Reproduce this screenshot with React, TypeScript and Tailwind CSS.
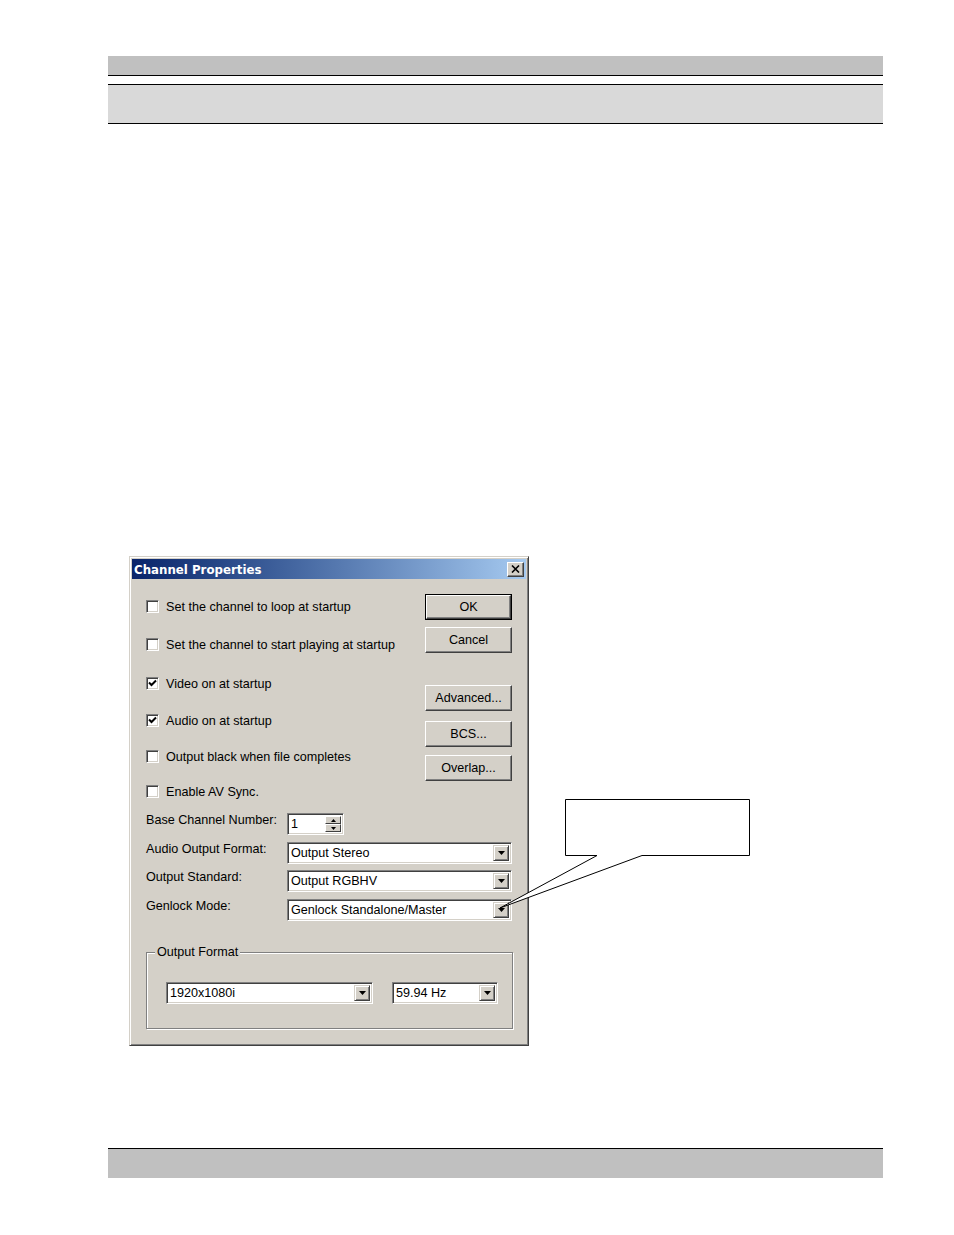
import React from "react";

const font = { fontFamily: '"Liberation Sans", Arial, sans-serif' };

function Check({ checked }: { checked?: boolean }) {
  return (
    <div className="w-[13px] h-[13px] bg-white border border-t-[#808080] border-l-[#808080] border-b-white border-r-white shadow-[inset_1px_1px_0_#404040,inset_-1px_-1px_0_#d4d0c8] flex items-center justify-center">
      {checked && (
        <svg width="9" height="9" viewBox="0 0 9 9">
          <path d="M1 3.5 L3.5 6 L8 1.5" stroke="#000" strokeWidth="2" fill="none" />
        </svg>
      )}
    </div>
  );
}

function CheckRow({ label, checked, mt }: { label: string; checked?: boolean; mt: string }) {
  return (
    <div className={`flex items-center h-[16px] ${mt}`}>
      <Check checked={checked} />
      <span className="ml-[7px] pt-[2px] text-[12.6px] text-black leading-none">{label}</span>
    </div>
  );
}

function Btn({ label, def, mt }: { label: string; def?: boolean; mt: string }) {
  const inner = (
    <div className="w-full h-full bg-[#d4d0c8] border border-t-white border-l-white border-b-[#404040] border-r-[#404040] shadow-[inset_-1px_-1px_0_#808080] flex items-center justify-center text-[12.6px] text-black">
      {label}
    </div>
  );
  return def ? (
    <div className={`w-[87px] h-[26px] border border-black ${mt}`}>{inner}</div>
  ) : (
    <div className={`w-[87px] h-[26px] ${mt}`}>{inner}</div>
  );
}

function Arrow() {
  return (
    <div className="w-[16px] h-full bg-[#d4d0c8] border border-t-[#d4d0c8] border-l-[#d4d0c8] border-b-[#404040] border-r-[#404040] shadow-[inset_1px_1px_0_#fff,inset_-1px_-1px_0_#808080] flex items-center justify-center">
      <svg width="7" height="4" viewBox="0 0 7 4">
        <path d="M0 0 H7 L3.5 4 Z" fill="#000" />
      </svg>
    </div>
  );
}

function Combo({ value, w }: { value: string; w: string }) {
  return (
    <div className={`${w} h-[22px] bg-white border border-t-[#808080] border-l-[#808080] border-b-white border-r-white shadow-[inset_1px_1px_0_#404040,inset_-1px_-1px_0_#d4d0c8] flex p-[2px]`}>
      <div className="flex-1 flex items-center pl-[1px] pt-[1px] text-[12.6px] text-black leading-none">{value}</div>
      <Arrow />
    </div>
  );
}

function Spin() {
  return (
    <div className="w-[57px] h-[22px] bg-white border border-t-[#808080] border-l-[#808080] border-b-white border-r-white shadow-[inset_1px_1px_0_#404040,inset_-1px_-1px_0_#d4d0c8] flex p-[2px]">
      <div className="flex-1 flex items-center pl-[1px] pt-[1px] text-[12.6px] text-black leading-none">1</div>
      <div className="w-[16px] h-full flex flex-col">
        {[0, 1].map((i) => (
          <div
            key={i}
            className="flex-1 bg-[#d4d0c8] border border-t-white border-l-white border-b-[#404040] border-r-[#404040] flex items-center justify-center"
          >
            <svg width="5" height="3" viewBox="0 0 5 3">
              {i === 0 ? <path d="M0 3 H5 L2.5 0 Z" fill="#000" /> : <path d="M0 0 H5 L2.5 3 Z" fill="#000" />}
            </svg>
          </div>
        ))}
      </div>
    </div>
  );
}

function FormRow({ label, children, mt }: { label: string; children: React.ReactNode; mt: string }) {
  return (
    <div className={`flex items-start h-[22px] ${mt}`}>
      <div className="w-[141px] text-[12.6px] text-black leading-[14px]">{label}</div>
      {children}
    </div>
  );
}

export default function App() {
  return (
    <div className="relative w-[954px] h-[1235px] bg-white flex flex-col" style={font}>
      {/* header */}
      <div className="mt-[56px] ml-[108px] w-[775px]">
        <div className="h-[20px] bg-[#c0c0c0] border-b border-black" />
        <div className="mt-[8px] h-[40px] bg-[#d9d9d9] border-t border-b border-black" />
      </div>

      {/* dialog */}
      <div className="mt-[432px] ml-[129px] w-[400px] h-[490px] bg-[#d4d0c8] border border-t-[#d4d0c8] border-l-[#d4d0c8] border-b-[#404040] border-r-[#404040] shadow-[inset_1px_1px_0_#fff,inset_-1px_-1px_0_#808080] p-[2px] flex flex-col">
        <div className="h-[20px] bg-gradient-to-r from-[#0a246a] to-[#a6caf0] flex items-center justify-between pl-[2px] pr-[2px]">
          <span
            className="text-[11.8px] pt-[3px] font-bold text-white leading-none"
            style={{ fontFamily: '"DejaVu Sans", Verdana, sans-serif' }}
          >
            Channel Properties
          </span>
          <div className="w-[17px] h-[15px] bg-[#d4d0c8] border border-t-white border-l-white border-b-[#404040] border-r-[#404040] shadow-[inset_-1px_-1px_0_#808080] flex items-center justify-center">
            <svg width="9" height="8" viewBox="0 0 9 8">
              <path d="M1 0.5 L8 7.5 M8 0.5 L1 7.5" stroke="#000" strokeWidth="1.6" />
            </svg>
          </div>
        </div>

        <div className="flex flex-col px-[14px] pt-[15px]">
          <div className="flex justify-between">
            <div className="flex flex-col mt-[4px]">
              <CheckRow label="Set the channel to loop at startup" mt="mt-0" />
              <CheckRow label="Set the channel to start playing at startup" mt="mt-[22px]" />
              <CheckRow label="Video on at startup" checked mt="mt-[23px]" />
              <CheckRow label="Audio on at startup" checked mt="mt-[21px]" />
              <CheckRow label="Output black when file completes" mt="mt-[20px]" />
              <CheckRow label="Enable AV Sync." mt="mt-[19px]" />
            </div>
            <div className="flex flex-col">
              <Btn label="OK" def mt="mt-0" />
              <Btn label="Cancel" mt="mt-[7px]" />
              <Btn label="Advanced..." mt="mt-[32px]" />
              <Btn label="BCS..." mt="mt-[10px]" />
              <Btn label="Overlap..." mt="mt-[8px]" />
            </div>
          </div>

          <FormRow label="Base Channel Number:" mt="mt-[14px]">
            <Spin />
          </FormRow>
          <FormRow label="Audio Output Format:" mt="mt-[7px]">
            <Combo value="Output Stereo" w="w-[225px]" />
          </FormRow>
          <FormRow label="Output Standard:" mt="mt-[6px]">
            <Combo value="Output RGBHV" w="w-[225px]" />
          </FormRow>
          <FormRow label="Genlock Mode:" mt="mt-[7px]">
            <Combo value="Genlock Standalone/Master" w="w-[225px]" />
          </FormRow>

          <div className="relative mt-[31px] w-[367px] h-[77px] border border-[#808080] shadow-[inset_1px_1px_0_#fff,1px_1px_0_#fff] flex pl-[19px] pt-[29px] gap-[19px]">
            <span className="absolute -top-[8px] left-[8px] px-[2px] bg-[#d4d0c8] text-[12.6px] text-black leading-[14px]">
              Output Format
            </span>
            <Combo value="1920x1080i" w="w-[207px]" />
            <Combo value="59.94 Hz" w="w-[106px]" />
          </div>
        </div>
      </div>

      {/* footer */}
      <div className="mt-[102px] ml-[108px] w-[775px] h-[30px] bg-[#c0c0c0] border-t border-black" />

      {/* callout */}
      <svg className="absolute left-0 top-0 pointer-events-none" width="954" height="1235" viewBox="0 0 954 1235">
        <path
          d="M565.5 799.5 H749.5 V855.5 H642 L500 908 L597 855.5 H565.5 Z"
          fill="#fff"
          stroke="#000"
          strokeWidth="1"
        />
      </svg>
    </div>
  );
}
